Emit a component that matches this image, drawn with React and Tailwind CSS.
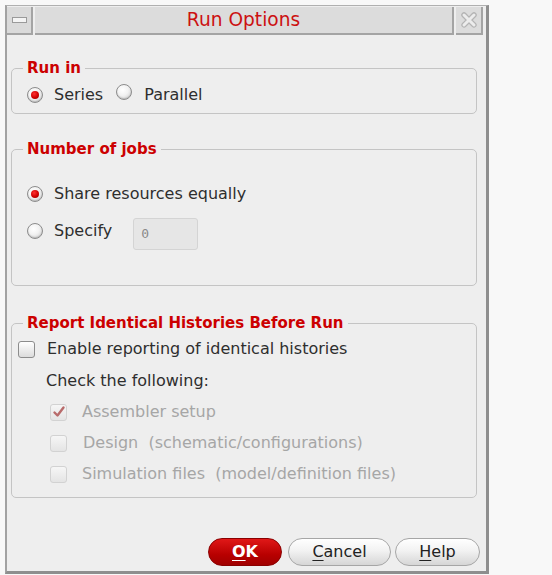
import React from "react";

const font = { fontFamily: '"DejaVu Sans", "Liberation Sans", sans-serif' };

function Radio({ checked }) {
  return (
    <span className="relative inline-flex h-[16px] w-[16px] shrink-0 items-center justify-center rounded-full border border-[#8c8c8c] bg-[radial-gradient(circle_at_40%_35%,#ffffff_0%,#f2f2f2_45%,#c8c8c8_100%)] shadow-[inset_0_-1px_1px_rgba(0,0,0,0.15)]">
      {checked && (
        <span className="h-[8px] w-[8px] rounded-full bg-[radial-gradient(circle_at_40%_35%,#ff3030_0%,#d00000_55%,#900000_100%)]" />
      )}
    </span>
  );
}

function Check({ disabled, checked }) {
  return (
    <span
      className={
        "relative inline-flex h-[17px] w-[17px] shrink-0 items-center justify-center rounded-[3px] border " +
        (disabled
          ? "border-[#d2d2d2] bg-[linear-gradient(#f6f6f6,#e4e4e4)]"
          : "border-[#8c8c8c] bg-[linear-gradient(#ffffff,#dcdcdc)]")
      }
    >
      {checked && (
        <svg width="14" height="14" viewBox="0 0 14 14" className="absolute left-[1px] top-[0px]">
          <path d="M2.5 7.5 L5.5 10.5 L11.5 2.5" fill="none" stroke="#b86b6b" strokeWidth="2.4" strokeLinecap="round" strokeLinejoin="round" />
        </svg>
      )}
    </span>
  );
}

function Legend({ children }) {
  return (
    <legend className="ml-[11px] px-[4px] text-[15px] font-bold leading-[18px] text-[#cc0000]">
      {children}
    </legend>
  );
}

function Btn({ children, primary, className }) {
  return (
    <button
      className={
        "flex h-[28px] items-center justify-center rounded-full text-[16px] " +
        (primary
          ? "border border-[#8a0000] bg-[linear-gradient(#e01818,#b80000_60%,#a00000)] font-bold text-white "
          : "border border-[#a6a6a6] bg-[linear-gradient(#ffffff,#f2f2f2_45%,#d6d6d6)] text-[#222] ") +
        className
      }
    >
      {children}
    </button>
  );
}

export default function App() {
  return (
    <div className="min-h-screen bg-[#f8f8f8] pl-[5px] pt-[5px]" style={font}>
      <div className="flex h-[569px] w-[484px] flex-col border-b-[3px] border-l-2 border-r-[3px] border-t border-b-[#8e8e8e] border-l-[#a2a2a2] border-r-[#8e8e8e] border-t-[#b0b0b0] bg-[#eeeeee]">
        {/* Title bar */}
        <div className="mt-[1px] flex h-[28px] gap-[2px] pr-[3px]">
          <div className="flex w-[26px] items-center justify-center border-b-2 border-r-2 border-b-[#a4a4a4] border-r-[#a4a4a4] bg-[#dadada]">
            <span className="h-[6px] w-[15px] border border-[#9a9a9a] bg-[#f4f4f4]" />
          </div>
          <div className="flex flex-1 items-center justify-center border-b-2 border-r-2 border-b-[#a4a4a4] border-r-[#a4a4a4] bg-[#dcdcdc] text-[18.6px] leading-none text-[#cc1111]">
            Run Options
          </div>
          <div className="flex w-[27px] items-center justify-center border-b-2 border-r-2 border-b-[#a4a4a4] border-r-[#a4a4a4] bg-[#dcdcdc]">
            <svg width="18" height="18" viewBox="0 0 18 18">
              <path d="M4 4 L14 14 M14 4 L4 14" stroke="#b4b4b4" strokeWidth="5.5" strokeLinecap="round" strokeDasharray="1.5 1" />
              <path d="M4 4 L14 14 M14 4 L4 14" stroke="#ececec" strokeWidth="3" strokeLinecap="round" />
            </svg>
          </div>
        </div>

        <div className="flex flex-1 flex-col pl-[4px] pr-[9px] text-[16px] text-[#2e2e2e]">
          {/* Run in */}
          <fieldset className="mt-[24px] rounded-[5px] border border-[#c4c4c4] pb-[8px] pt-[8px]">
            <Legend>Run in</Legend>
            <div className="flex h-[20px] items-center pl-[15px]">
              <Radio checked />
              <span className="ml-[11px]">Series</span>
              <span className="ml-[13px]"><Radio /></span>
              <span className="ml-[12px]">Parallel</span>
            </div>
          </fieldset>

          {/* Number of jobs */}
          <fieldset className="mt-[26px] rounded-[5px] border border-[#c4c4c4] pb-[35px] pt-[26px]">
            <Legend>Number of jobs</Legend>
            <div className="flex h-[20px] items-center pl-[15px]">
              <Radio checked />
              <span className="ml-[11px]">Share resources equally</span>
            </div>
            <div className="mt-[14px] flex items-start pl-[15px]">
              <div className="mt-[3px] flex h-[20px] items-center">
                <Radio />
                <span className="ml-[11px]">Specify</span>
              </div>
              <div className="ml-[21px] flex h-[32px] w-[65px] items-center rounded-[3px] border border-[#d4d4d4] bg-[#e6e6e6] pl-[7px] text-[13px] text-[#8a8a8a]" style={{ fontFamily: '"DejaVu Sans Mono", monospace' }}>
                0
              </div>
            </div>
          </fieldset>

          {/* Report identical histories */}
          <fieldset className="mt-[28px] rounded-[5px] border border-[#c4c4c4] pb-[13px] pt-[7px]">
            <Legend>Report Identical Histories Before Run</Legend>
            <div className="flex h-[20px] items-center pl-[6px]">
              <Check />
              <span className="ml-[12px]">Enable reporting of identical histories</span>
            </div>
            <div className="ml-[34px] mt-[12px] flex h-[20px] items-center">Check the following:</div>
            <div className="ml-[38px] mt-[11px] flex h-[20px] items-center text-[#a6a6a6]">
              <Check disabled checked />
              <span className="ml-[15px]">Assembler setup</span>
            </div>
            <div className="ml-[38px] mt-[11px] flex h-[20px] items-center text-[#a6a6a6]">
              <Check disabled />
              <span className="ml-[16px]">Design&nbsp; (schematic/configurations)</span>
            </div>
            <div className="ml-[38px] mt-[11px] flex h-[20px] items-center text-[#a6a6a6]">
              <Check disabled />
              <span className="ml-[15px]">Simulation files&nbsp; (model/definition files)</span>
            </div>
          </fieldset>

          {/* Buttons */}
          <div className="mt-[40px] flex justify-end">
            <Btn primary className="w-[74px]"><span><span className="underline underline-offset-[3px]">O</span>K</span></Btn>
            <Btn className="ml-[6px] w-[103px]"><span><span className="underline underline-offset-[3px]">C</span>ancel</span></Btn>
            <Btn className="ml-[4px] mr-[-3px] w-[85px]"><span><span className="underline underline-offset-[3px]">H</span>elp</span></Btn>
          </div>
        </div>
      </div>
    </div>
  );
}
